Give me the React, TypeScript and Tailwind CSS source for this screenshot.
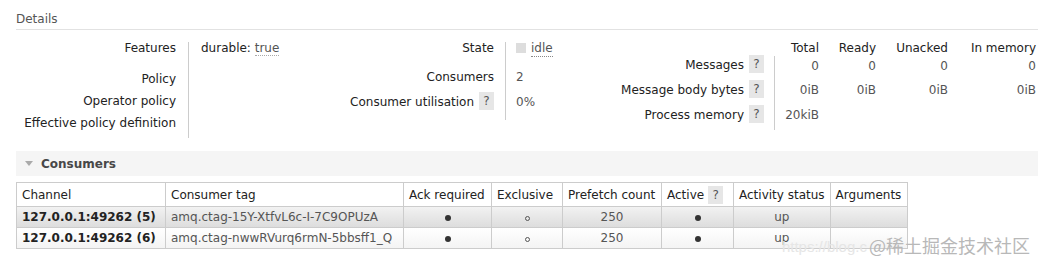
const font = "font-['DejaVu_Sans','Liberation_Sans',sans-serif]";

function Help() {
  return (
    <span className="ml-[5px] inline-flex h-[18px] w-[15px] items-center justify-center bg-[#e6e6e6] text-[#555]">
      ?
    </span>
  );
}

function Dot({ filled }: { filled: boolean }) {
  return filled ? (
    <span className="inline-block h-[6px] w-[6px] rounded-full bg-[#333]" />
  ) : (
    <span className="inline-block h-[5px] w-[5px] rounded-full border border-[#555]" />
  );
}

const cols = [
  { name: "Channel", w: "w-[149px]" },
  { name: "Consumer tag", w: "w-[238px]" },
  { name: "Ack required", w: "w-[88px]" },
  { name: "Exclusive", w: "w-[71px]" },
  { name: "Prefetch count", w: "w-[99px]" },
  { name: "Active", w: "w-[72px]", help: true },
  { name: "Activity status", w: "w-[96px]" },
  { name: "Arguments", w: "w-[77px]" },
];

const consumers = [
  { channel: "127.0.0.1:49262 (5)", tag: "amq.ctag-15Y-XtfvL6c-I-7C9OPUzA", odd: true },
  { channel: "127.0.0.1:49262 (6)", tag: "amq.ctag-nwwRVurq6rmN-5bbsff1_Q", odd: false },
];

const msgCols = ["w-[44px]", "w-[57px]", "w-[72px]", "w-[88px]"];

export default function App() {
  return (
    <div className={`${font} relative h-[264px] w-[1038px] overflow-hidden bg-white pl-4 text-[12px] leading-[18px] text-[#222]`}>
      {/* Details */}
      <div className="flex h-[30px] items-end border-b border-[#e2e2e2] pb-[1px] text-[#555]">Details</div>

      <div className="flex pt-[9px]">
        {/* block 1 */}
        <div className="flex w-[314px]">
          <div className="w-[160px] text-right whitespace-nowrap">
            <div className="h-[31px]">Features</div>
            <div className="h-[22px]">Policy</div>
            <div className="h-[22px]">Operator policy</div>
            <div className="h-[22px]">Effective policy definition</div>
          </div>
          <div className="ml-3 mt-[3px] h-[96px] border-l border-[#ccc] pl-3">
            <div className="-mt-[3px]">
              durable: <span className="border-b border-dotted border-[#aaa] text-[#555]">true</span>
            </div>
          </div>
        </div>

        {/* block 2 */}
        <div className="flex w-[270px]">
          <div className="w-[164px] text-right whitespace-nowrap">
            <div className="h-[29px]">State</div>
            <div className="h-[24px]">Consumers</div>
            <div className="flex h-[22px] items-start justify-end">
              <span className="mt-[1px]">Consumer utilisation</span>
              <Help />
            </div>
          </div>
          <div className="ml-[11px] mt-[3px] h-[78px] border-l border-[#ccc] pl-[10px] text-[#555]">
            <div className="-mt-[3px] flex h-[29px] items-start">
              <span className="mt-[4px] mr-[5px] inline-block h-[10px] w-[10px] bg-[#ddd]" />
              <span className="mt-[1px] border-b border-dotted border-[#888] leading-[16px]">idle</span>
            </div>
            <div className="h-[25px]">2</div>
            <div>0%</div>
          </div>
        </div>

        {/* block 3 */}
        <div className="flex flex-col">
          <div className="flex h-[16px]">
            <div className="w-[175px]" />
            {["Total", "Ready", "Unacked", "In memory"].map((h, i) => (
              <div key={h} className={`${msgCols[i]} text-right whitespace-nowrap`}>{h}</div>
            ))}
          </div>
          <div className="flex">
            <div className="w-[164px] text-right whitespace-nowrap">
              {["Messages", "Message body bytes", "Process memory"].map((l) => (
                <div key={l} className="flex h-[25px] items-start justify-end">
                  <span className="mt-[1px]">{l}</span>
                  <Help />
                </div>
              ))}
            </div>
            <div className="ml-[10px] mt-[1px] flex h-[74px] border-l border-[#ccc] text-[#555]">
              <div>
                <div className="flex h-[25px]">
                  {["0", "0", "0", "0"].map((v, i) => (
                    <div key={i} className={`${msgCols[i]} pt-[1px] text-right`}>{v}</div>
                  ))}
                </div>
                <div className="flex h-[25px]">
                  {["0iB", "0iB", "0iB", "0iB"].map((v, i) => (
                    <div key={i} className={`${msgCols[i]} text-right`}>{v}</div>
                  ))}
                </div>
                <div className="flex h-[25px]">
                  <div className={`${msgCols[0]} text-right`}>20kiB</div>
                </div>
              </div>
            </div>
          </div>
        </div>
      </div>

      {/* Consumers section */}
      <div className="mt-[13px] flex h-[25px] items-center bg-[#f5f5f5] pl-[9px] text-[#484848]">
        <span className="mr-[8px] inline-block h-0 w-0 border-x-[4px] border-t-[5px] border-x-transparent border-t-[#aaa]" />
        <span className="text-[12px] font-bold">Consumers</span>
      </div>

      <table className="mt-[6px] border-collapse">
        <thead>
          <tr className="h-[24px]">
            {cols.map((c) => (
              <th
                key={c.name}
                className={`${c.w} border border-[#ccc] pl-[5px] ${c.help ? "pr-[2px]" : "pr-[5px]"} text-left font-normal whitespace-nowrap`}
              >
                {c.help ? (
                  <span className="flex items-center">
                    {c.name}
                    <span className="ml-[4px] inline-flex h-[18px] w-[15px] items-center justify-center bg-[#e6e6e6] text-[#555]">?</span>
                  </span>
                ) : (
                  c.name
                )}
              </th>
            ))}
          </tr>
        </thead>
        <tbody>
          {consumers.map((r) => (
            <tr
              key={r.channel}
              className={`h-[21px] bg-linear-to-b ${r.odd ? "from-[#f2f2f2] to-[#dcdcdc]" : "from-white to-[#f3f3f3]"}`}
            >
              <td className="border border-[#ccc] px-[5px] font-bold whitespace-nowrap">{r.channel}</td>
              <td className="border border-[#ccc] px-[5px] text-[#555] whitespace-nowrap">{r.tag}</td>
              <td className="border border-[#ccc] text-center leading-none"><Dot filled /></td>
              <td className="border border-[#ccc] text-center leading-none"><Dot filled={false} /></td>
              <td className="border border-[#ccc] text-center text-[#555]">250</td>
              <td className="border border-[#ccc] text-center leading-none"><Dot filled /></td>
              <td className="border border-[#ccc] text-center text-[#555]">up</td>
              <td className="border border-[#ccc]" />
            </tr>
          ))}
        </tbody>
      </table>

      {/* watermark */}
      <div className="pointer-events-none absolute bottom-[10px] right-[8px] flex items-end whitespace-nowrap">
        <span className="mr-[2px] font-['Liberation_Sans',sans-serif] text-[15px] leading-none text-[#e6e6e6]">https://blog.c</span>
        <span className="font-['Noto_Sans_CJK_SC',sans-serif] text-[18px] leading-none text-[#b8b8b8]">@稀土掘金技术社区</span>
      </div>
    </div>
  );
}
